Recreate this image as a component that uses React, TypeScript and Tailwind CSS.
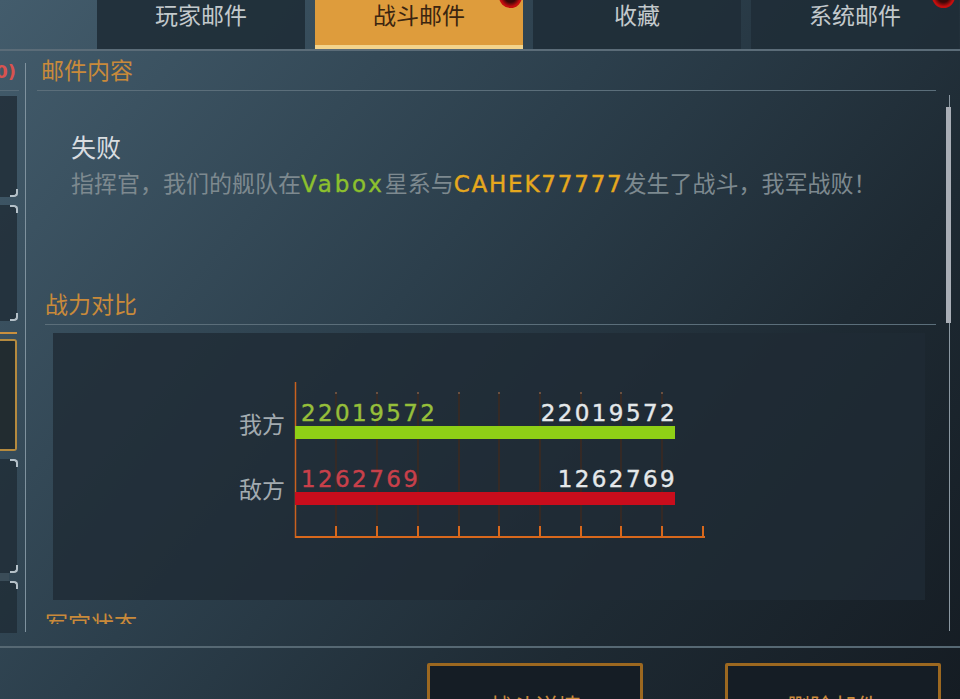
import React from 'react';

const cjk = '"Noto Sans CJK SC", sans-serif';
const latin = '"DejaVu Sans", sans-serif';
const ticks = [336, 377, 418, 459, 499, 540, 581, 621, 662, 703];

function Tab({ label, active, badge }: { label: string; active?: boolean; badge?: string }) {
  return (
    <div
      className={
        active
          ? 'relative flex w-[208px] items-start justify-center border-b-4 border-[#f3d48c] bg-[#de9c3c] pt-[1px] text-[#3a2510]'
          : 'relative flex w-[208px] items-start justify-center bg-[#1f2d37]/90 pt-[1px] text-[#c3c9cc]'
      }
    >
      {label}
      {badge && (
        <span
          className={`absolute top-[-15px] h-[23px] w-[23px] rounded-full bg-[radial-gradient(circle,#3a0808_35%,#c40e0e_62%)] ${badge}`}
        />
      )}
    </div>
  );
}

function Corner({ bottom }: { bottom?: boolean }) {
  return (
    <span
      className={
        bottom
          ? 'absolute bottom-0 right-[-1px] h-[8px] w-[8px] rounded-br-[4px] border-b-2 border-r-2 border-[#b4c0c8]'
          : 'absolute right-[-1px] top-0 h-[8px] w-[8px] rounded-tr-[4px] border-r-2 border-t-2 border-[#b4c0c8]'
      }
    />
  );
}

function MailItem({ height, top, bottom }: { height: string; top?: boolean; bottom?: boolean }) {
  return (
    <div className={`relative w-[17px] shrink-0 ${height}`}>
      <div className="h-full w-full bg-[#1f2c36]/80" />
      {top && <Corner />}
      {bottom && <Corner bottom />}
    </div>
  );
}

function SectionTitle({ children }: { children: React.ReactNode }) {
  return <h3 className="text-[23px] font-normal leading-[30px] text-[#c98a3a]">{children}</h3>;
}

function PowerChart() {
  return (
    <svg width="872" height="267" viewBox="53 333 872 267">
      {ticks.map((x) => (
        <g key={x}>
          {x < 700 && (
            <>
              <line x1={x} y1="393" x2={x} y2="527" stroke="#3d2a20" strokeWidth="1.5" />
              <rect x={x - 1} y="392" width="2" height="2" fill="#6a5040" />
            </>
          )}
          <line x1={x} y1="526" x2={x} y2="537" stroke="#d8681c" strokeWidth="2" />
        </g>
      ))}
      <line x1="295.5" y1="382" x2="295.5" y2="538" stroke="#c9611f" strokeWidth="1.5" />
      <line x1="295" y1="537" x2="705" y2="537" stroke="#d8681c" strokeWidth="2" />
      <rect x="295" y="426" width="380" height="13" fill="#8fd016" />
      <rect x="295" y="492" width="380" height="13" fill="#c90d1c" />
      <g fontFamily={cjk} fontSize="23" fill="#a3abb0">
        <text x="239" y="433">我方</text>
        <text x="239" y="498">敌方</text>
      </g>
      <g fontFamily={latin} fontSize="23" letterSpacing="2.4" strokeWidth="0.4">
        <text x="301" y="421" fill="#96bf3a" stroke="#96bf3a">22019572</text>
        <text x="677" y="421" fill="#e4e8ea" stroke="#e4e8ea" textAnchor="end">22019572</text>
        <text x="301" y="487" fill="#c8404a" stroke="#c8404a">1262769</text>
        <text x="677" y="487" fill="#e4e8ea" stroke="#e4e8ea" textAnchor="end">1262769</text>
      </g>
    </svg>
  );
}

export default function App() {
  return (
    <div
      className="flex h-[699px] w-[960px] flex-col overflow-hidden bg-[linear-gradient(130deg,#435c6c_0%,#2c3f4c_42%,#1e2a33_72%,#151c23_100%)] text-[23px]"
      style={{ fontFamily: cjk }}
    >
      {/* Tabs */}
      <div className="flex h-[49px] shrink-0 gap-[10px] pl-[97px] leading-[26px]">
        <Tab label="玩家邮件" />
        <Tab label="战斗邮件" active badge="right-[1px]" />
        <Tab label="收藏" />
        <Tab label="系统邮件" badge="right-[4px]" />
      </div>
      <div className="h-[2px] shrink-0 bg-[#5b6c78]" />

      {/* Main */}
      <div className="flex h-[595px] shrink-0">
        {/* Mail list, cut off on the left */}
        <div className="flex w-[25px] shrink-0 flex-col">
          <div className="flex h-[39px] shrink-0 justify-end whitespace-nowrap pr-[9px] pt-[9px] text-[18px] font-bold leading-[24px] text-[#d9534f]">
            <span style={{ fontFamily: latin }}>(0)</span>
          </div>
          <div className="mr-[6px] h-[1px] shrink-0 bg-[#566a77]" />
          <div className="flex flex-col pt-[5px]">
            <MailItem height="h-[101px]" bottom />
            <div className="h-[8px] shrink-0" />
            <MailItem height="h-[116px]" top bottom />
            <div className="mt-[11px] h-[2px] w-[17px] shrink-0 bg-[#c98f3e]" />
            <div className="mt-[5px] h-[112px] w-[17px] shrink-0 rounded-r-[3px] border-2 border-l-0 border-[#b58a3e] bg-[#222c30]" />
            <div className="h-[8px] shrink-0" />
            <MailItem height="h-[114px]" top bottom />
            <div className="h-[8px] w-[9px] shrink-0 bg-[#3a4c58]" />
            <MailItem height="h-[52px]" top />
          </div>
        </div>

        {/* Content */}
        <div className="relative w-[935px] shrink-0">
          <div className="absolute bottom-[14px] left-0 top-[12px] w-[1px] bg-[#7f929e]" />
          <div className="ml-[12px] flex h-[39px] items-end pb-[6px]">
            <div className="ml-[4px]">
              <SectionTitle>邮件内容</SectionTitle>
            </div>
          </div>
          <div className="ml-[12px] mr-[24px] h-[1px] bg-[#5b6e7a]" />
          <div className="h-[533px] overflow-hidden">
            <div className="pl-[46px] pt-[38px]">
              <p className="text-[25px] leading-[34px] text-[#d9dde0]">失败</p>
              <p className="mt-[3px] leading-[32px] text-[#7d898f]">
                指挥官，我们的舰队在
                <span className="tracking-[2.8px] text-[#8dc02e] [-webkit-text-stroke:0.4px_#8dc02e]" style={{ fontFamily: latin }}>
                  Vabox
                </span>
                星系与
                <span className="tracking-[1.8px] text-[#e6a81e] [-webkit-text-stroke:0.4px_#e6a81e]" style={{ fontFamily: latin }}>
                  CAHEK77777
                </span>
                发生了战斗，我军战败！
              </p>
            </div>
            <div className="ml-[20px] mt-[88px] w-[891px]">
              <div className="border-b border-[#5b6e7a] pb-[6px]">
                <SectionTitle>战力对比</SectionTitle>
              </div>
              <div className="ml-[8px] mt-[8px] h-[267px] w-[872px] bg-[#1f2a34]/80">
                <PowerChart />
              </div>
              <div className="mt-[8px]">
                <SectionTitle>军官状态</SectionTitle>
              </div>
            </div>
          </div>

          {/* Scrollbar */}
          <div className="absolute bottom-[15px] right-[10px] top-[44px] w-[1px] bg-[#8b98a2]" />
          <div className="absolute right-[9px] top-[56px] h-[216px] w-[5px] bg-[#a9aeb6]" />
        </div>
      </div>

      <div className="h-[2px] shrink-0 bg-[#566873]" />

      {/* Bottom buttons */}
      <div className="flex shrink-0 gap-[82px] pl-[427px] pt-[15px]">
        <button className="flex h-[84px] w-[216px] items-center justify-center rounded-[2px] border-[3px] border-[#9c6820] bg-[#151d25] text-[#c98a3a]">
          战斗详情
        </button>
        <button className="flex h-[84px] w-[216px] items-center justify-center rounded-[2px] border-[3px] border-[#9c6820] bg-[#151d25] text-[#c98a3a]">
          删除邮件
        </button>
      </div>
    </div>
  );
}
